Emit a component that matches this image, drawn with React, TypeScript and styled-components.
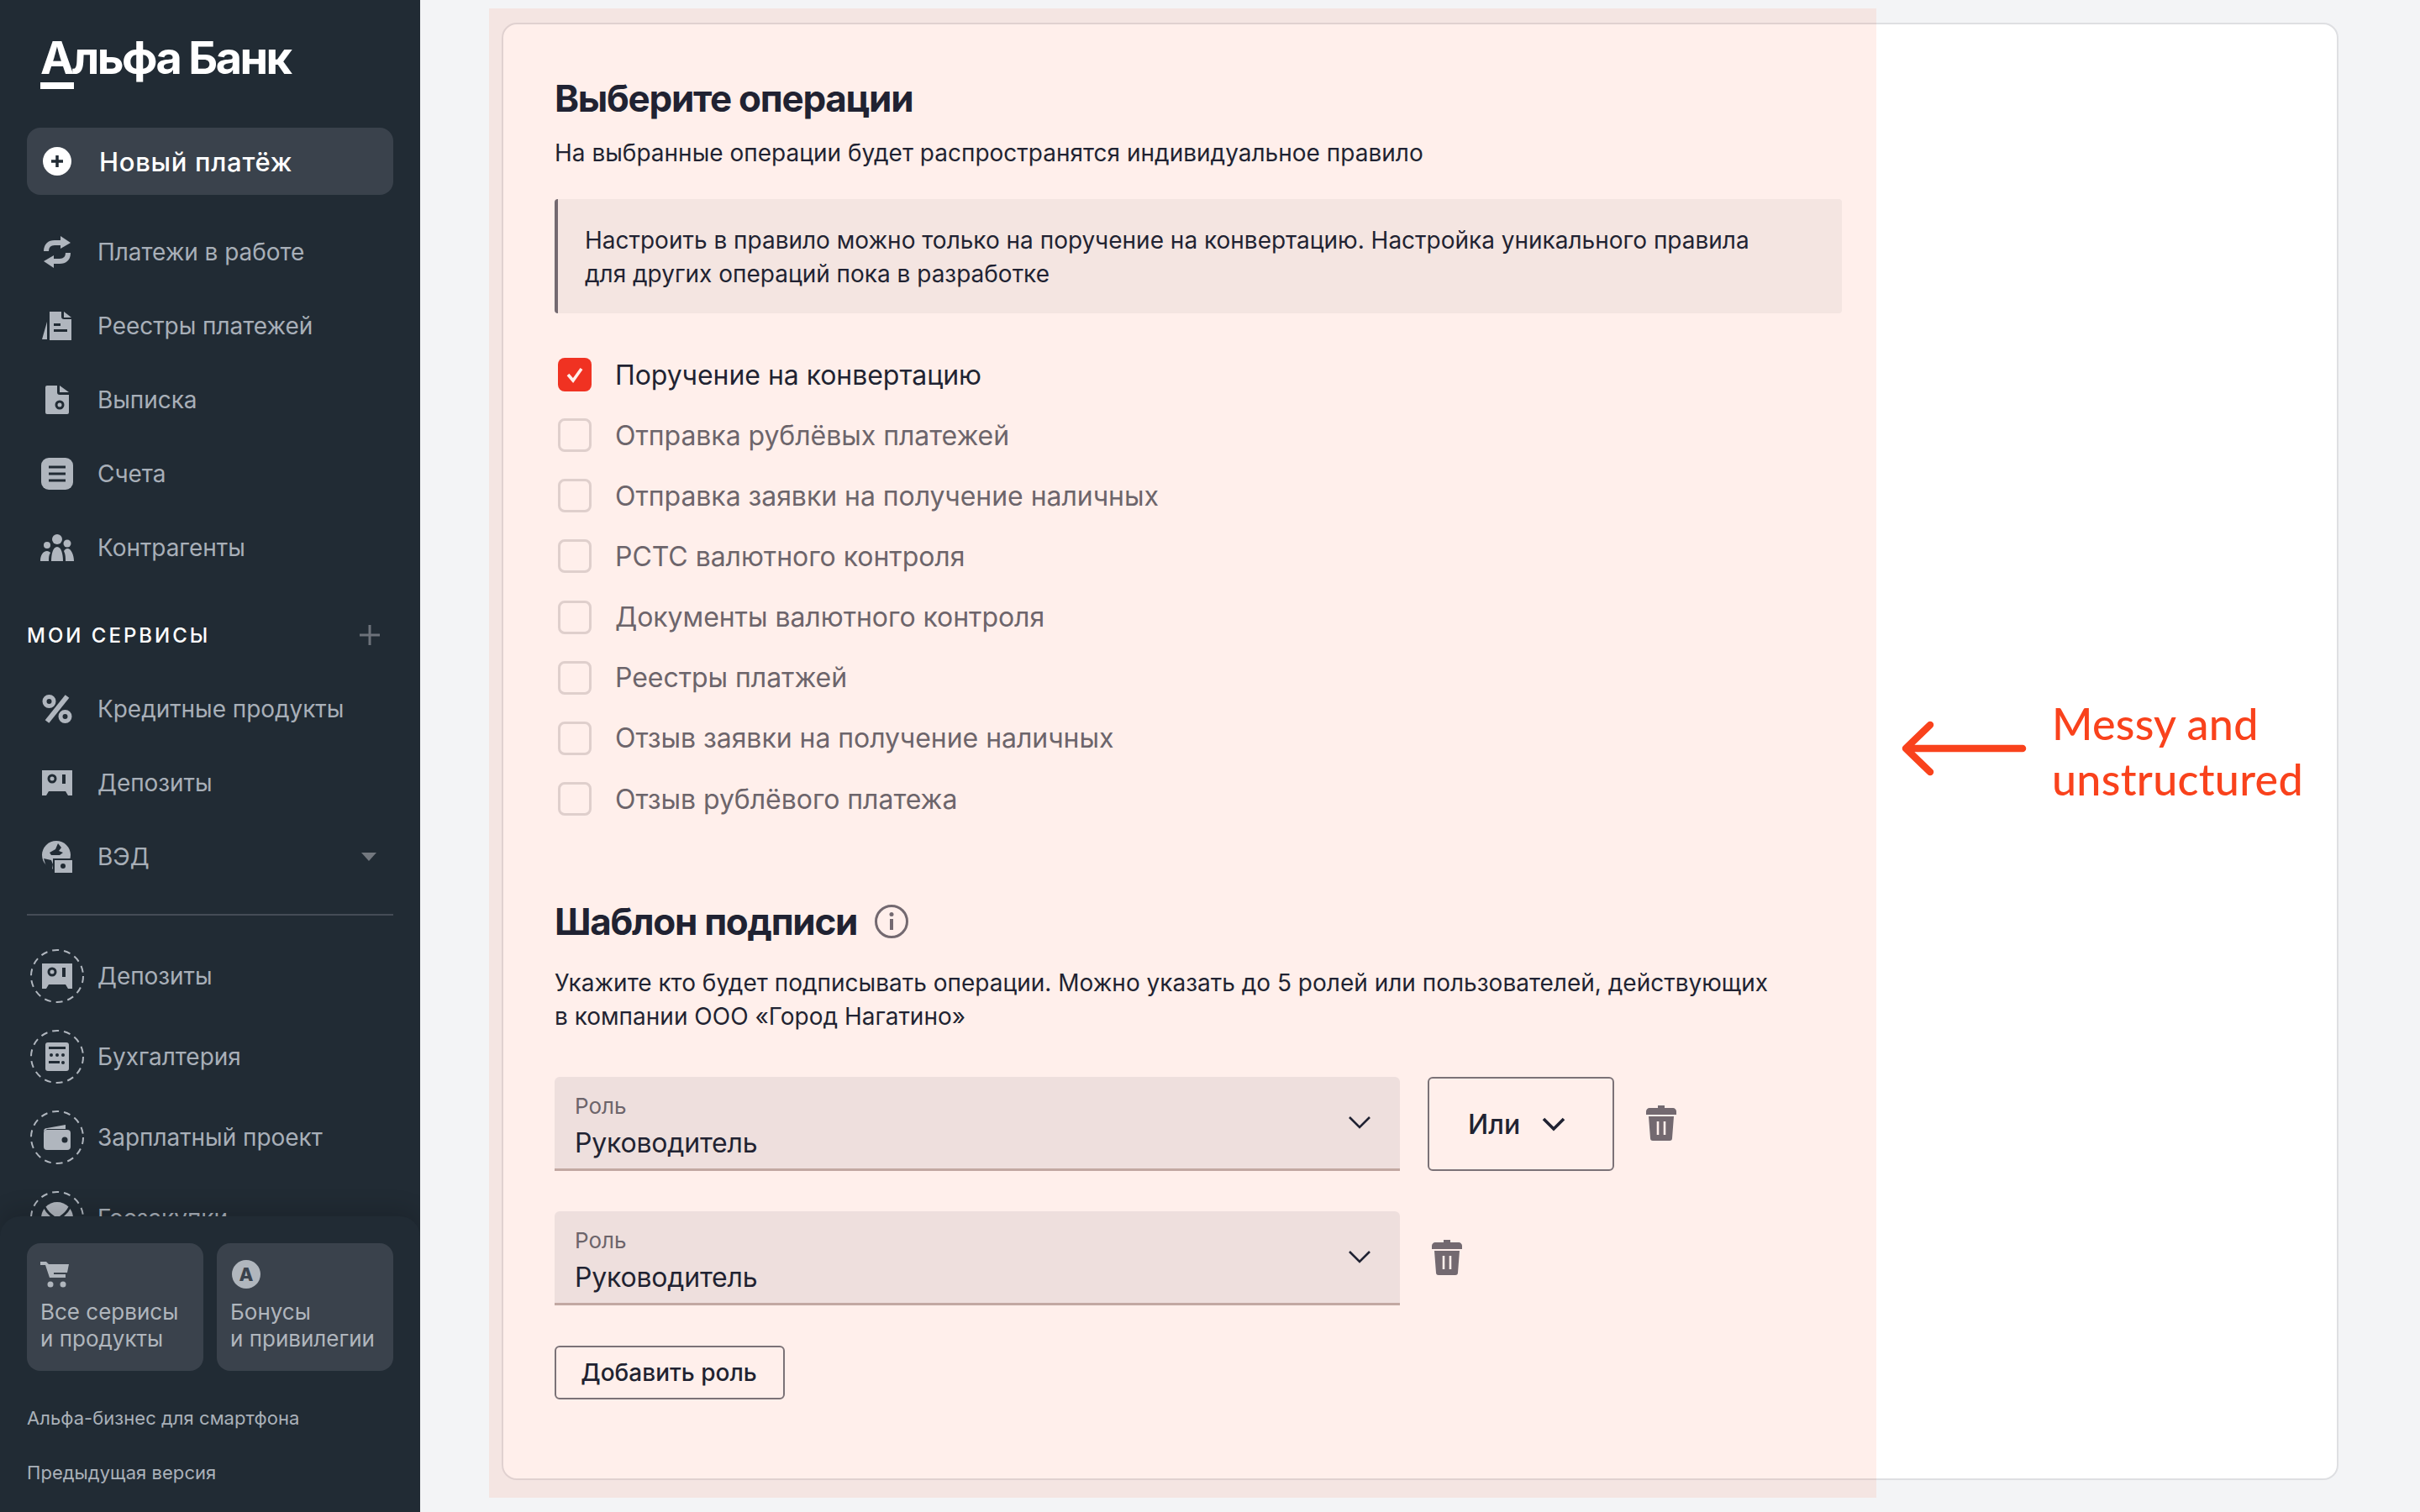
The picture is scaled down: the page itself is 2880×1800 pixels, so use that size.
import React from 'react';
import styled, { createGlobalStyle } from 'styled-components';

const GlobalStyle = createGlobalStyle`
  html, body {
    margin: 0;
    padding: 0;
    background: #f3f4f6;
    font-family: Inter, "Noto Sans", sans-serif;
  }
  * { box-sizing: border-box; }
`;

const Page = styled.div`
  display: flex;
  width: 2880px;
  height: 1800px;
  overflow: hidden;
`;

const Sidebar = styled.aside`
  display: flex;
  flex-direction: column;
  flex: none;
  width: 500px;
  height: 1800px;
  overflow: hidden;
  background: #212b34;
`;

const SideScroll = styled.div`
  flex: 1;
  min-height: 0;
  overflow: hidden;
  padding: 0 32px;
`;

const LogoWrap = styled.div`
  height: 152px;
  padding: 40px 0 0 16px;
`;

const LogoText = styled.div`
  color: #fff;
  font-size: 54px;
  line-height: 58px;
  font-weight: 700;
  letter-spacing: -2.6px;
  white-space: nowrap;
`;

const LogoBar = styled.div`
  width: 40px;
  height: 8px;
  background: #fff;
`;

const NewPayment = styled.div`
  display: flex;
  align-items: center;
  height: 80px;
  margin-bottom: 24px;
  padding-left: 19px;
  gap: 33px;
  border-radius: 16px;
  background: #3a424c;
  color: #fff;
  font-size: 31px;
  font-weight: 500;
  letter-spacing: 0.7px;
`;

const NavRow = styled.div<{ $tall?: boolean }>`
  display: flex;
  align-items: center;
  height: ${(p) => (p.$tall ? 96 : 88)}px;
  color: #a8afb8;
  font-size: 28px;
  letter-spacing: -0.05px;
  white-space: nowrap;
`;

const IconSlot = styled.span`
  display: flex;
  align-items: center;
  justify-content: center;
  flex: none;
  width: 40px;
  height: 40px;
  margin: 0 28px 0 16px;
`;

const DashedSlot = styled.span`
  position: relative;
  display: flex;
  align-items: center;
  justify-content: center;
  flex: none;
  width: 64px;
  height: 64px;
  margin: 0 16px 0 4px;
`;

const DashedRing = styled.svg`
  position: absolute;
  inset: 0;
`;

const Caret = styled.span`
  margin-left: auto;
  margin-right: 20px;
  width: 0;
  height: 0;
  border-left: 9px solid transparent;
  border-right: 9px solid transparent;
  border-top: 10px solid #73787f;
`;

const SideHeader = styled.div`
  display: flex;
  align-items: center;
  justify-content: space-between;
  height: 40px;
  margin: 40px 0 24px;
  padding-right: 16px;
  color: #fff;
  font-size: 24px;
  font-weight: 500;
  letter-spacing: 3px;
  white-space: nowrap;
`;

const SideDivider = styled.div`
  height: 2px;
  margin: 24px 0;
  background: #454c56;
`;

const SideFooter = styled.div`
  position: relative;
  flex: none;
  height: 352px;
  padding: 32px 32px 0;
  border-radius: 24px 24px 0 0;
  background: #212b34;
  box-shadow: 0 -10px 24px rgba(0, 0, 0, 0.14);
`;

const TileRow = styled.div`
  display: grid;
  grid-template-columns: 210px 210px;
  gap: 16px;
  margin-bottom: 24px;
`;

const Tile = styled.div`
  height: 152px;
  padding: 20px 17px 0 16px;
  border-radius: 16px;
  background: #3a424c;
  color: #b0b6bd;
  font-size: 26px;
  line-height: 32px;
  white-space: nowrap;
`;

const TileIcon = styled.div`
  display: flex;
  align-items: center;
  height: 34px;
  margin-bottom: 12px;
`;

const AlfaBadge = styled.span`
  display: flex;
  align-items: center;
  justify-content: center;
  width: 34px;
  height: 34px;
  margin-left: 2px;
  border-radius: 50%;
  background: #b0b6bd;
  color: #3a424c;
  font-size: 22px;
  font-weight: 800;
`;

const FootLink = styled.div`
  height: 65px;
  line-height: 65px;
  color: #aab1b9;
  font-size: 22px;
  letter-spacing: 0.04px;
  white-space: nowrap;
`;

const Main = styled.main`
  position: relative;
  flex: 1;
  padding: 27px 97px 38px;
`;

const Card = styled.section`
  height: 1735px;
  padding: 60px 60px 0 61px;
  border: 2px solid #dedfe2;
  border-radius: 18px;
  background: #fff;
  color: #0b1f35;
`;

const Heading = styled.h2`
  margin: 0;
  font-size: 44px;
  line-height: 56px;
  font-weight: 700;
  letter-spacing: -1.3px;
  white-space: nowrap;
`;

const Lead = styled.p`
  margin: 17px 0 35px;
  font-size: 28px;
  line-height: 40px;
  white-space: nowrap;
`;

const Note = styled.div`
  width: 1532px;
  height: 136px;
  margin-bottom: 37px;
  padding: 29px 32px 27px;
  border-left: 4px solid #666d79;
  border-radius: 4px;
  background: #f3f4f5;
  font-size: 28px;
  line-height: 40px;
  letter-spacing: -0.01px;
  white-space: nowrap;
`;

const CheckRow = styled.label<{ $on?: boolean }>`
  display: flex;
  align-items: center;
  gap: 28px;
  height: 72.15px;
  padding-left: 4px;
  color: ${(p) => (p.$on ? '#0b1f35' : '#5f6873')};
  font-size: 32px;
  letter-spacing: -0.05px;
  white-space: nowrap;
`;

const CheckBox = styled.span<{ $on?: boolean }>`
  display: flex;
  align-items: center;
  justify-content: center;
  flex: none;
  width: 40px;
  height: 40px;
  border-radius: 8px;
  border: ${(p) => (p.$on ? 'none' : '3px solid #dcdcde')};
  background: ${(p) => (p.$on ? '#ef3124' : 'transparent')};
`;

const SubHeadRow = styled.div`
  display: flex;
  align-items: center;
  gap: 20px;
  margin-top: 82px;
`;

const Para = styled.p`
  margin: 25px 0 52px;
  font-size: 28px;
  line-height: 40px;
  white-space: nowrap;
`;

const RoleRow = styled.div`
  display: flex;
  align-items: stretch;
  gap: 33px;
  height: 112px;
  margin-bottom: 48px;
`;

const RoleSelect = styled.div`
  position: relative;
  flex: none;
  width: 1006px;
  padding: 19px 24px 0;
  border-radius: 6px 6px 0 0;
  border-bottom: 3px solid #bdb2b0;
  background: #edeef0;
`;

const RoleLabel = styled.div`
  color: #5f6873;
  font-size: 26px;
  line-height: 32px;
`;

const RoleValue = styled.div`
  margin-top: 8px;
  font-size: 32px;
  line-height: 40px;
  letter-spacing: -0.2px;
`;

const SelectChevron = styled.span`
  position: absolute;
  right: 34px;
  top: 45px;
  display: flex;
`;

const OrButton = styled.div`
  display: flex;
  align-items: center;
  gap: 26px;
  flex: none;
  width: 222px;
  padding-left: 46px;
  border: 2px solid #6f7780;
  border-radius: 6px;
  font-size: 32px;
  font-weight: 500;
`;

const TrashSlot = styled.span`
  display: flex;
  align-items: center;
  flex: none;
  margin-left: 5px;
  margin-top: -2px;
`;

const AddButton = styled.div`
  display: inline-flex;
  align-items: center;
  justify-content: center;
  width: 274px;
  height: 64px;
  padding-right: 2px;
  border: 2px solid #6f7780;
  border-radius: 6px;
  font-size: 28px;
  font-weight: 500;
  white-space: nowrap;
`;

const Tint = styled.div`
  position: absolute;
  left: 82px;
  top: 10px;
  width: 1651px;
  height: 1773px;
  background: rgba(255, 70, 20, 0.085);
  pointer-events: none;
`;

const Annotation = styled.div`
  position: absolute;
  left: 1761px;
  top: 828px;
  display: flex;
  align-items: center;
  gap: 25px;
`;

const ArrowWrap = styled.span`
  display: flex;
  margin-bottom: 6px;
`;

const HandText = styled.div`
  color: #f9421c;
  font-family: Lato, "Noto Sans", sans-serif;
  font-size: 52px;
  line-height: 66px;
  font-weight: 500;
  letter-spacing: 0.3px;
  white-space: nowrap;
`;

const fill = '#b0b6be';
const dark = '#212b34';
const muted = '#666d79';

const SwapIcon = () => (
  <svg width="36" height="40" viewBox="0 0 36 40" fill="none">
    <path d="M5 19c0-7 4-10 10-10h10" stroke={fill} strokeWidth="6" />
    <path d="M22 1l12 8-12 7z" fill={fill} />
    <path d="M31 21c0 7-4 10-10 10H11" stroke={fill} strokeWidth="6" />
    <path d="M14 39L2 31l12-7z" fill={fill} />
  </svg>
);

const RegistryIcon = () => (
  <svg width="36" height="34" viewBox="0 0 36 34" fill={fill}>
    <path d="M9 0h14v6c0 2 1 3 3 3h9v25H9z" />
    <path d="M26 0l9 7h-9z" />
    <path d="M6 12v21H0z" />
    <rect x="14" y="21" width="16" height="3" fill={dark} />
    <rect x="14" y="14" width="8" height="3" fill={dark} />
  </svg>
);

const StatementIcon = () => (
  <svg width="28" height="34" viewBox="0 0 28 34">
    <path d="M0 2a2 2 0 012-2h12v8c0 2 1 3 3 3h11v21a2 2 0 01-2 2H2a2 2 0 01-2-2z" fill={fill} />
    <path d="M17 0l11 8H17z" fill={fill} />
    <circle cx="17" cy="23" r="4" fill="none" stroke={dark} strokeWidth="3" />
  </svg>
);

const AccountsIcon = () => (
  <svg width="38" height="38" viewBox="0 0 38 38">
    <rect width="38" height="38" rx="9" fill={fill} />
    <path d="M9 11h20M9 19h20M9 27h20" stroke={dark} strokeWidth="3" />
  </svg>
);

const PeopleIcon = () => (
  <svg width="40" height="32" viewBox="0 0 40 32" fill={fill}>
    <circle cx="20" cy="6" r="6" />
    <circle cx="32" cy="11" r="4.5" />
    <circle cx="8" cy="13" r="4" />
    <path d="M0 32c0-7 3-12 8-12 2 0 3 1 4 2-2 3-2 6-2 10z" />
    <path d="M13 32c0-8 2-17 7-17s7 9 7 17z" />
    <path d="M30 32c0-4 0-8-2-12 1-2 3-3 4-3 5 0 8 8 8 15z" />
  </svg>
);

const PercentIcon = () => (
  <svg width="36" height="34" viewBox="0 0 36 34" fill="none" stroke={fill}>
    <circle cx="8.5" cy="8" r="5.5" strokeWidth="5" />
    <circle cx="27.5" cy="26" r="5.5" strokeWidth="5" />
    <path d="M6 32L30 2" strokeWidth="6" />
  </svg>
);

const DepositIcon = () => (
  <svg width="36" height="30" viewBox="0 0 36 30">
    <path d="M0 0h36v30h-5l-3-5H8l-3 5H0z" fill={fill} />
    <circle cx="12" cy="10" r="4" fill="none" stroke={dark} strokeWidth="3" />
    <rect x="24" y="5" width="4" height="11" fill={dark} />
  </svg>
);

const GlobeIcon = () => (
  <svg width="36" height="38" viewBox="0 0 36 38">
    <circle cx="17" cy="17" r="17" fill={fill} />
    <path d="M9 14l7-4 3-7 4 5-3 4 5 2-4 3H11z" fill={dark} />
    <path d="M2 21l9 2 2 5-1 6-7-3z" fill={dark} />
    <rect x="13" y="21" width="23" height="17" fill={dark} />
    <rect x="15" y="23" width="21" height="15" fill={fill} />
    <circle cx="25" cy="30" r="3" fill={dark} />
  </svg>
);

const CalcIcon = () => (
  <svg width="28" height="34" viewBox="0 0 28 34">
    <rect width="28" height="34" rx="3" fill={fill} />
    <rect x="4" y="5" width="20" height="3" fill={dark} />
    <g fill={dark}>
      <circle cx="7" cy="15" r="2" />
      <circle cx="14" cy="15" r="2" />
      <circle cx="21" cy="15" r="2" />
      <rect x="4" y="22" width="13" height="3" />
      <circle cx="21" cy="24" r="2" />
    </g>
  </svg>
);

const WalletIcon = () => (
  <svg width="32" height="30" viewBox="0 0 32 30">
    <path d="M0 8a4 4 0 014-4l22-4v5H4z" fill={fill} />
    <rect y="6" width="32" height="24" rx="4" fill={fill} />
    <circle cx="25" cy="18" r="3.5" fill={dark} />
  </svg>
);

const EagleIcon = () => (
  <svg width="38" height="38" viewBox="0 0 38 38">
    <circle cx="19" cy="19" r="19" fill={fill} />
    <path d="M4 6c3 6 6 9 11 12M34 6c-3 6-6 9-11 12" stroke={dark} strokeWidth="3" fill="none" />
  </svg>
);

const CartIcon = () => (
  <svg width="34" height="32" viewBox="0 0 34 32" fill="#b0b6bd">
    <path d="M0 1h7l3 3h24l-2 10H16v2h14v4H11L6 5H0z" />
    <circle cx="12" cy="28" r="3.5" />
    <circle cx="27" cy="28" r="3.5" />
  </svg>
);

const PlusBadge = () => (
  <svg width="34" height="34" viewBox="0 0 34 34">
    <circle cx="17" cy="17" r="17" fill="#fff" />
    <path d="M17 10v14M10 17h14" stroke="#212b34" strokeWidth="3.5" />
  </svg>
);

const PlusIcon = () => (
  <svg width="24" height="24" viewBox="0 0 24 24">
    <path d="M12 0v24M0 12h24" stroke="#6d727a" strokeWidth="3" />
  </svg>
);

const Chevron = ({ bold }: { bold?: boolean }) => (
  <svg width="28" height="18" viewBox="0 0 28 18" fill="none">
    <path d="M2 3l12 12L26 3" stroke="#0b1f35" strokeWidth={bold ? 3.6 : 2.6} />
  </svg>
);

const CheckMark = () => (
  <svg width="24" height="22" viewBox="0 0 24 22" fill="none">
    <path d="M4 11l6 7L20 4" stroke="#fff" strokeWidth="3.6" />
  </svg>
);

const InfoIcon = () => (
  <svg width="42" height="42" viewBox="0 0 42 42" fill="none">
    <circle cx="21" cy="21" r="18.5" stroke={muted} strokeWidth="3" />
    <rect x="19" y="18" width="4" height="13" fill={muted} />
    <circle cx="21" cy="12.5" r="2.5" fill={muted} />
  </svg>
);

const TrashIcon = () => (
  <svg width="36" height="42" viewBox="0 0 36 42">
    <path d="M14 0h8v3h10c2 0 4 2 4 4v4H0V7c0-2 2-4 4-4h10z" fill={muted} />
    <path d="M3 13h30l-2 26c0 2-1 3-3 3H8c-2 0-3-1-3-3z" fill={muted} />
    <path d="M14 19v16M22 19v16" stroke="#fff" strokeWidth="2.6" />
  </svg>
);

const ArrowIcon = () => (
  <svg width="156" height="66" viewBox="0 0 156 66" fill="none">
    <path d="M146 33H8M36 5L7 33l29 28" stroke="#f9421c" strokeWidth="8.5" strokeLinecap="round" strokeLinejoin="round" />
  </svg>
);

const Ring = () => (
  <DashedRing width="64" height="64" viewBox="0 0 64 64" fill="none">
    <circle cx="32" cy="32" r="31" stroke={fill} strokeWidth="2" strokeDasharray="8 6" />
  </DashedRing>
);

const operations = [
  'Отправка рублёвых платежей',
  'Отправка заявки на получение наличных',
  'РСТС валютного контроля',
  'Документы валютного контроля',
  'Реестры платжей',
  'Отзыв заявки на получение наличных',
  'Отзыв рублёвого платежа',
];

const mainNav = [
  { label: 'Платежи в работе', icon: <SwapIcon /> },
  { label: 'Реестры платежей', icon: <RegistryIcon /> },
  { label: 'Выписка', icon: <StatementIcon /> },
  { label: 'Счета', icon: <AccountsIcon /> },
  { label: 'Контрагенты', icon: <PeopleIcon /> },
];

const extraNav = [
  { label: 'Депозиты', icon: <DepositIcon /> },
  { label: 'Бухгалтерия', icon: <CalcIcon /> },
  { label: 'Зарплатный проект', icon: <WalletIcon /> },
  { label: 'Госзакупки', icon: <EagleIcon /> },
];

const App = () => {
  return (
    <Page>
      <GlobalStyle />
      <Sidebar>
        <SideScroll>
          <LogoWrap>
            <LogoText>Альфа Банк</LogoText>
            <LogoBar />
          </LogoWrap>
          <NewPayment>
            <PlusBadge />
            Новый платёж
          </NewPayment>
          {mainNav.map((item) => (
            <NavRow key={item.label}>
              <IconSlot>{item.icon}</IconSlot>
              {item.label}
            </NavRow>
          ))}
          <SideHeader>
            МОИ СЕРВИСЫ
            <PlusIcon />
          </SideHeader>
          <NavRow>
            <IconSlot><PercentIcon /></IconSlot>
            Кредитные продукты
          </NavRow>
          <NavRow>
            <IconSlot><DepositIcon /></IconSlot>
            Депозиты
          </NavRow>
          <NavRow>
            <IconSlot><GlobeIcon /></IconSlot>
            ВЭД
            <Caret />
          </NavRow>
          <SideDivider />
          {extraNav.map((item) => (
            <NavRow $tall key={item.label}>
              <DashedSlot>
                <Ring />
                {item.icon}
              </DashedSlot>
              {item.label}
            </NavRow>
          ))}
        </SideScroll>
        <SideFooter>
          <TileRow>
            <Tile>
              <TileIcon><CartIcon /></TileIcon>
              Все сервисы<br />и продукты
            </Tile>
            <Tile>
              <TileIcon><AlfaBadge>A</AlfaBadge></TileIcon>
              Бонусы<br />и привилегии
            </Tile>
          </TileRow>
          <FootLink>Альфа-бизнес для смартфона</FootLink>
          <FootLink>Предыдущая версия</FootLink>
        </SideFooter>
      </Sidebar>
      <Main>
        <Card>
          <Heading>Выберите операции</Heading>
          <Lead>На выбранные операции будет распространятся индивидуальное правило</Lead>
          <Note>
            Настроить в правило можно только на поручение на конвертацию. Настройка уникального правила<br />
            для других операций пока в разработке
          </Note>
          <CheckRow $on>
            <CheckBox $on><CheckMark /></CheckBox>
            Поручение на конвертацию
          </CheckRow>
          {operations.map((op) => (
            <CheckRow key={op}>
              <CheckBox />
              {op}
            </CheckRow>
          ))}
          <SubHeadRow>
            <Heading>Шаблон подписи</Heading>
            <InfoIcon />
          </SubHeadRow>
          <Para>
            Укажите кто будет подписывать операции. Можно указать до 5 ролей или пользователей, действующих<br />
            в компании ООО «Город Нагатино»
          </Para>
          <RoleRow>
            <RoleSelect>
              <RoleLabel>Роль</RoleLabel>
              <RoleValue>Руководитель</RoleValue>
              <SelectChevron><Chevron /></SelectChevron>
            </RoleSelect>
            <OrButton>
              Или
              <Chevron bold />
            </OrButton>
            <TrashSlot><TrashIcon /></TrashSlot>
          </RoleRow>
          <RoleRow>
            <RoleSelect>
              <RoleLabel>Роль</RoleLabel>
              <RoleValue>Руководитель</RoleValue>
              <SelectChevron><Chevron /></SelectChevron>
            </RoleSelect>
            <TrashSlot><TrashIcon /></TrashSlot>
          </RoleRow>
          <AddButton>Добавить роль</AddButton>
        </Card>
        <Tint />
        <Annotation>
          <ArrowWrap><ArrowIcon /></ArrowWrap>
          <HandText>Messy and<br />unstructured</HandText>
        </Annotation>
      </Main>
    </Page>
  );
};

export default App;
